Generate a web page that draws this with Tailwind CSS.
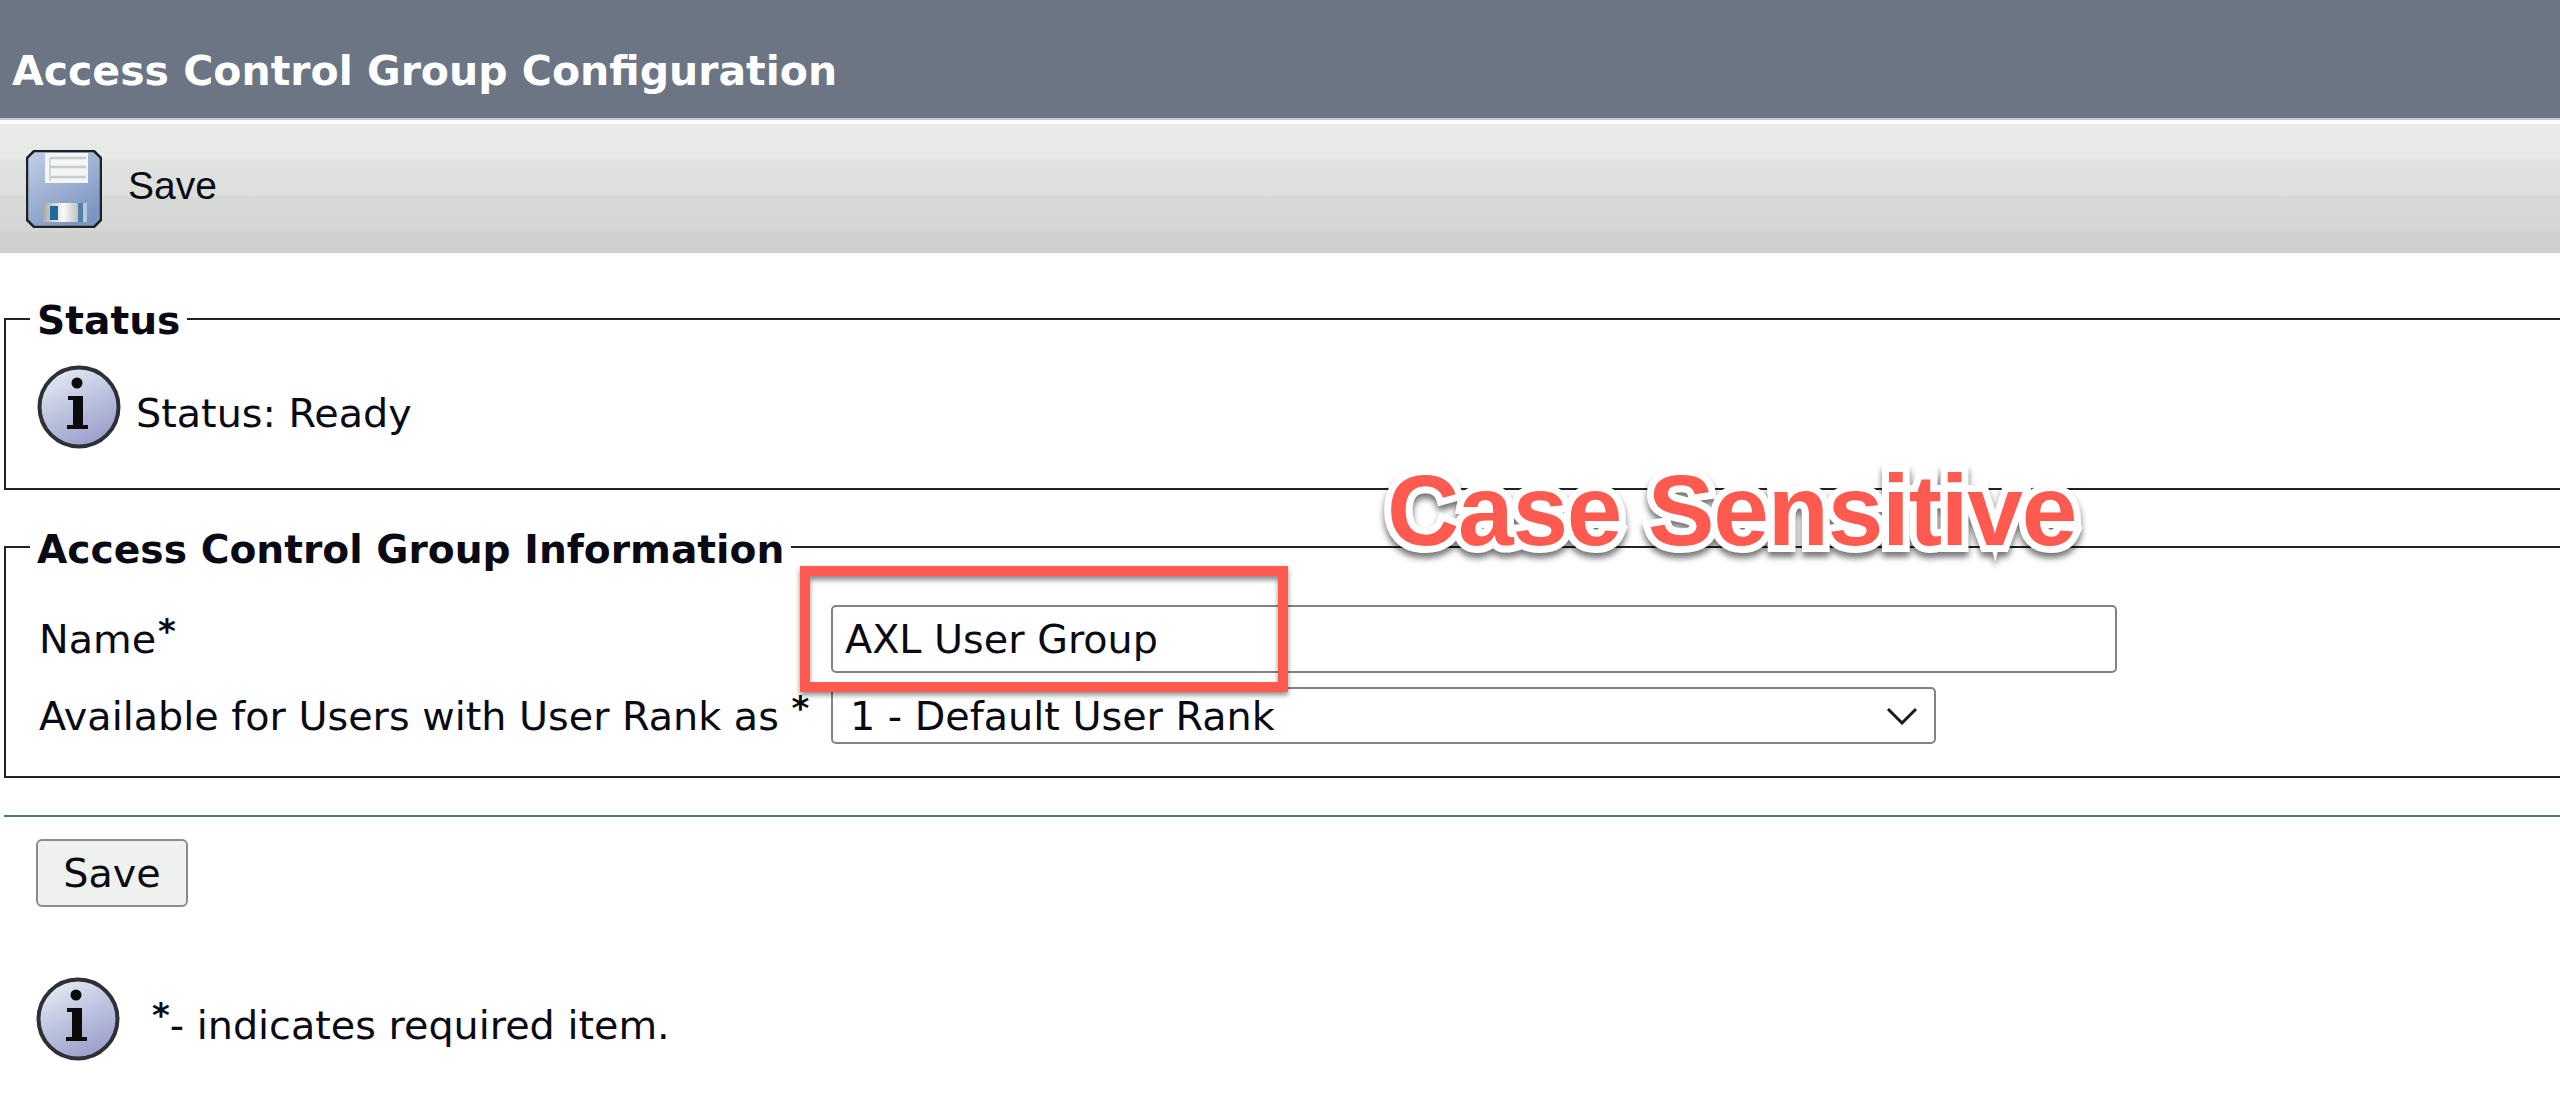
<!DOCTYPE html>
<html lang="en">
<head>
    <meta charset="utf-8" />
    <title>Access Control Group Configuration</title>
    <script src="https://cdn.jsdelivr.net/npm/@tailwindcss/browser@4"></script>
</head>
<body class="relative w-full h-[1118px] overflow-hidden bg-white text-[#0a0a14] font-['DejaVu_Sans',sans-serif] text-[39.7px]">
    <!-- shared icon defs -->
    <svg class="absolute w-0 h-0">
        <defs>
            <linearGradient id="infoFill" x1="0.2" y1="0" x2="0.7" y2="1">
                <stop offset="0" stop-color="#e6edf4" />
                <stop offset="0.5" stop-color="#bcc3de" />
                <stop offset="1" stop-color="#9a9ccb" />
            </linearGradient>
            <linearGradient id="diskFill" x1="0" y1="0" x2="0.6" y2="1">
                <stop offset="0" stop-color="#c3d0e8" />
                <stop offset="1" stop-color="#7d95c2" />
            </linearGradient>
            <linearGradient id="shutterFill" x1="0" y1="0" x2="1" y2="0">
                <stop offset="0" stop-color="#a9a9a4" />
                <stop offset="0.55" stop-color="#fafafa" />
                <stop offset="1" stop-color="#b8b8b4" />
            </linearGradient>
            <symbol id="info" viewBox="0 0 84 84">
                <circle cx="42" cy="42" r="39.5" fill="url(#infoFill)" stroke="#2e3036" stroke-width="4" />
                <circle cx="40" cy="18" r="5.5" fill="#0b0b0b" />
                <path d="M31 31H46V60H51V64H30V60H36V35H31Z" fill="#0b0b0b" />
            </symbol>
        </defs>
    </svg>

    <div class="h-[118px] bg-[#6b7584] flex items-end pl-3 pb-[27px]">
        <h1 class="font-bold text-white leading-[40px] text-[41px]">Access Control Group Configuration</h1>
    </div>
    <div class="h-[6px] bg-[#fafbfa] border-t-2 border-[#c3c7cb]"></div>

    <div class="h-[129px] bg-[linear-gradient(#e9ece9_0%,#e6e9e6_27%,#dfe2df_28%,#dcdfdc_55%,#d6d9d6_56%,#d3d6d3_83%,#cdd0cd_84%,#cdd0cd_100%)] flex items-center pl-[26px] gap-[26px]">
        <svg class="w-[76px] h-[78px] blur-[0.6px]" viewBox="0 0 76 78">
            <path d="M8 1H68L75 8V70L68 77H8L1 70V8Z" fill="url(#diskFill)" stroke="#1c2226" stroke-width="2.5" />
            <path d="M19 3H62V33H19Z" fill="#f4f5f6" />
            <path d="M24 8H60M24 17H60M24 27H60" stroke="#c8cacb" stroke-width="2.5" />
            <path d="M24 8V31" stroke="#c8cacb" stroke-width="1.5" />
            <path d="M17 72V58Q17 53 22 53H54V72Z" fill="url(#shutterFill)" />
            <rect x="24" y="56" width="8" height="14" fill="#1f6a9c" />
            <rect x="52" y="53" width="5" height="19" fill="#4f81ad" />
            <rect x="57" y="53" width="4" height="19" fill="#b5c8dc" />
        </svg>
        <span class="font-['Liberation_Sans',sans-serif] text-[39px] -mt-[4px]">Save</span>
    </div>

    <div class="pl-[4px] pt-[46px] -mr-4">
        <fieldset class="border-[2.5px] border-[#222] h-[191px] pl-[24px]">
            <legend class="font-bold text-[39.2px] px-[7px] leading-[40px]"><span class="relative top-[2px]">Status</span></legend>
            <div class="flex items-center gap-[15px] pl-[7px] pt-[26px]">
                <svg class="w-[84px] h-[84px] blur-[0.4px]"><use href="#info" /></svg>
                <span class="mt-[14px]">Status: Ready</span>
            </div>
        </fieldset>

        <fieldset class="mt-[37px] border-[2.5px] border-[#222] h-[251px] pl-[24px]">
            <legend class="font-bold text-[39.2px] px-[7px] leading-[40px]"><span class="relative top-[3px]">Access Control Group Information</span></legend>
            <div class="flex items-center h-[67px] mt-[38px] pl-[9px]">
                <span class="w-[792px] mt-[2px]">Name<sup class="text-[34px] font-bold top-[-10px] ml-[2px]">*</sup></span>
                <div class="w-[1286px] h-[68px] border-[2.5px] border-[#808483] rounded-[5px] pl-[12px] pt-[2px] flex items-center">AXL User Group</div>
            </div>
            <div class="flex items-center h-[57px] mt-[15px] pl-[9px]">
                <span class="w-[792px] mt-[2px] whitespace-nowrap">Available for Users with User Rank as <sup class="text-[34px] font-bold top-[-10px]">*</sup></span>
                <div class="w-[1105px] h-[57px] border-[2.5px] border-[#808483] rounded-[5px] pl-[17px] pr-[16px] flex items-center justify-between">
                    <span class="mt-[2px]">1 - Default User Rank</span>
                    <svg class="w-[32px] h-[18px]" viewBox="0 0 32 18" fill="none" stroke="#1a1a1a" stroke-width="3"><path d="M2 2L16 16L30 2" /></svg>
                </div>
            </div>
        </fieldset>
    </div>

    <hr class="mt-[37px] ml-[4px] border-t-[2.5px] border-[#4f7a77]" />

    <button class="block ml-[36px] mt-[22px] w-[152px] h-[68px] pt-[2px] bg-[#eef1ee] border-[2px] border-[#8a8d8c] rounded-[6px]">Save</button>

    <div class="flex items-start mt-[70px] ml-[36px]">
        <svg class="w-[84px] h-[84px] blur-[0.4px]"><use href="#info" /></svg>
        <p class="ml-[32px] mt-[19px]"><sup class="text-[34px] font-bold top-[-12px]">*</sup>- indicates required item.</p>
    </div>

    <!-- annotation drawn over the form -->
    <div class="absolute left-[800px] top-[566px] w-[488px] h-[126px] border-[10px] border-[#ff5a4f] shadow-[0_3px_5px_rgba(0,0,0,0.45),inset_0_4px_5px_rgba(0,0,0,0.45)]"></div>
    <div class="absolute left-[1387px] top-[452px] font-['Liberation_Sans',sans-serif] font-bold text-[100px] leading-[116px] tracking-[-1.2px] whitespace-nowrap text-[#ff5a4f] [-webkit-text-stroke:14px_white] [paint-order:stroke_fill] drop-shadow-[0_5px_3px_rgba(0,0,0,0.55)]">Case Sensitive</div>
</body>
</html>
